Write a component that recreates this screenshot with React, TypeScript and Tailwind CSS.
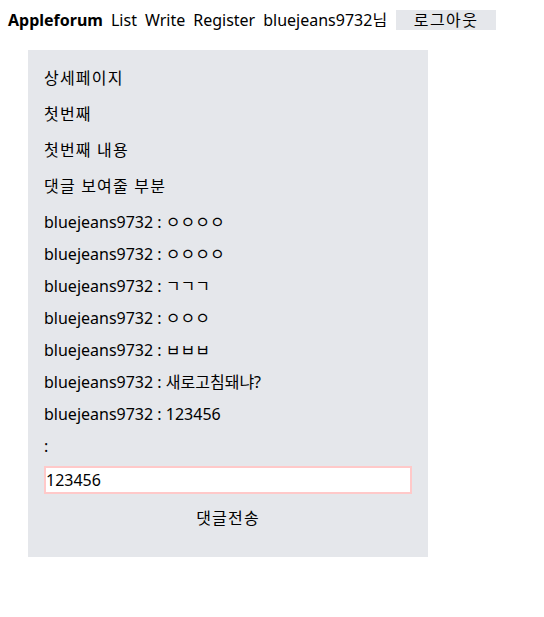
import { useState } from "react";

const comments = [
  "ㅇㅇㅇㅇ",
  "ㅇㅇㅇㅇ",
  "ㄱㄱㄱ",
  "ㅇㅇㅇ",
  "ㅂㅂㅂ",
  "새로고침돼냐?",
  "123456",
];

export default function App() {
  const [text, setText] = useState("123456");

  return (
    <div className="min-h-[617px] bg-white text-black text-base font-['Noto_Sans','Noto_Sans_CJK_KR',sans-serif]">
      {/* Nav */}
      <nav className="flex items-center gap-2 h-10 px-2 leading-6">
        <span className="font-bold">Appleforum</span>
        <span>List</span>
        <span>Write</span>
        <span>Register</span>
        <span>bluejeans9732님</span>
        <button className="ml-[1px] w-[100px] h-5 bg-gray-200 flex items-center justify-center leading-5 tracking-[1.5px]">
          로그아웃
        </button>
      </nav>

      {/* Detail */}
      <div className="ml-7 mt-[10px] w-[400px] bg-gray-200 p-4 pb-[27px] leading-6">
        <div className="flex flex-col gap-3 tracking-[1.2px]">
          <h4>상세페이지</h4>
          <p>첫번째</p>
          <p>첫번째 내용</p>
          <p>댓글 보여줄 부분</p>
        </div>
        <div className="flex flex-col gap-2 mt-3">
          {comments.map((c, i) => (
            <p key={i}>bluejeans9732 : {c}</p>
          ))}
          <p>:</p>
        </div>
        <input
          value={text}
          onChange={(e) => setText(e.target.value)}
          className="mt-2 w-full h-7 bg-white border-2 border-red-200 px-0 leading-6 outline-none"
        />
        <div className="flex justify-center mt-3">
          <button className="leading-6 tracking-[1.2px]">댓글전송</button>
        </div>
      </div>
    </div>
  );
}
